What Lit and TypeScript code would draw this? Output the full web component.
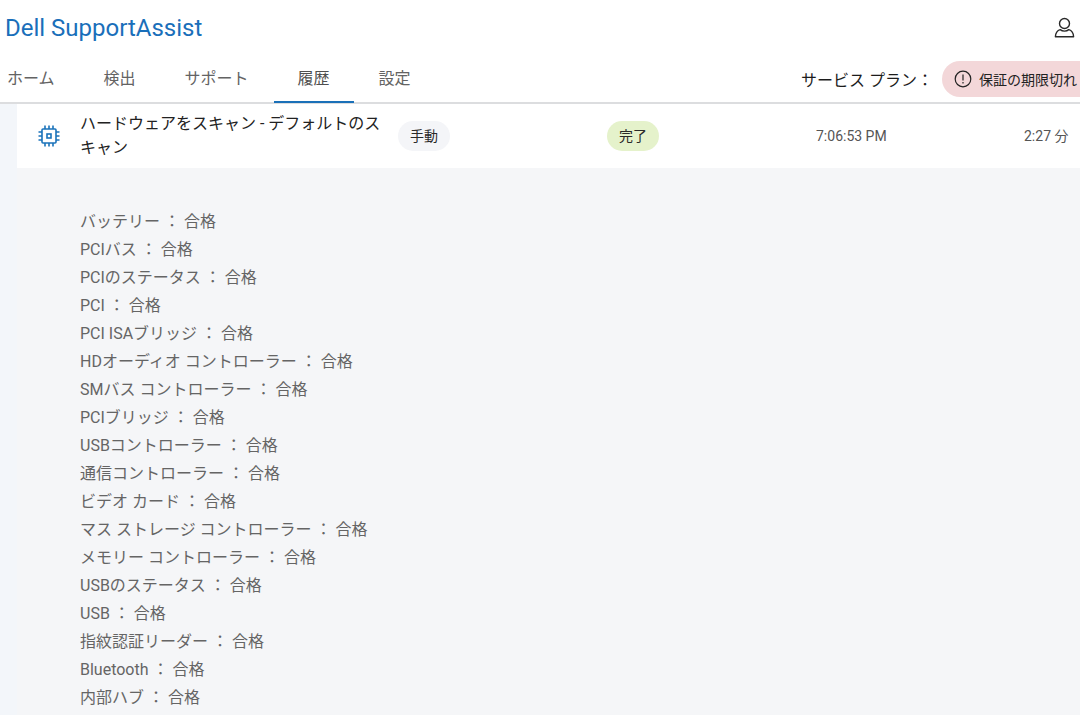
import { LitElement, html, css, svg } from "lit";
import { customElement, property } from "lit/decorators.js";
import { classMap } from "lit/directives/class-map.js";

const tabs = ["ホーム", "検出", "サポート", "履歴", "設定"];

const results = [
  "バッテリー",
  "PCIバス",
  "PCIのステータス",
  "PCI",
  "PCI ISAブリッジ",
  "HDオーディオ コントローラー",
  "SMバス コントローラー",
  "PCIブリッジ",
  "USBコントローラー",
  "通信コントローラー",
  "ビデオ カード",
  "マス ストレージ コントローラー",
  "メモリー コントローラー",
  "USBのステータス",
  "USB",
  "指紋認証リーダー",
  "Bluetooth",
  "内部ハブ",
];

@customElement("support-header")
class SupportHeader extends LitElement {
  @property() current = "";

  static styles = css`
    :host {
      display: block;
      background: #fff;
      border-bottom: 2px solid #dcdddf;
    }
    .brand {
      display: flex;
      justify-content: space-between;
      align-items: center;
      height: 55px;
      padding: 0 5px;
    }
    h1 {
      margin: 0;
      font-size: 24px;
      font-weight: 400;
      line-height: 32px;
      color: #1a6fba;
    }
    .account {
      display: flex;
      padding: 0;
      border: 0;
      background: none;
      color: #2a2a2a;
    }
    .bar {
      display: flex;
      justify-content: space-between;
      align-items: stretch;
      height: 47px;
    }
    nav {
      display: flex;
      gap: 1px;
      margin-left: -17px;
    }
    .tab {
      padding: 12px 24px 0;
      line-height: 24px;
      color: #636363;
      text-decoration: none;
      margin-bottom: -1px;
    }
    .active {
      color: #4f4f4f;
      border-bottom: 2px solid #1a70b8;
    }
    .plan {
      display: flex;
      align-items: center;
      gap: 9px;
      color: #1c1c1c;
    }
    .expired {
      display: flex;
      align-items: center;
      gap: 7px;
      height: 36px;
      padding: 0 3px 0 12px;
      border: 0;
      border-radius: 18px 0 0 18px;
      background: #f3d7d9;
      color: #222;
      font: inherit;
      font-size: 14px;
    }
  `;

  render() {
    return html`
      <div class="brand">
        <h1>Dell SupportAssist</h1>
        <button class="account" aria-label="アカウント">
          <svg width="21" height="22" viewBox="0 0 21 22" fill="none" stroke="currentColor" stroke-width="1.4">
            <circle cx="10.5" cy="6.5" r="5" />
            <path d="M6.2 12.6C3.4 13.4 1.6 15.8 1.4 19.8H19.6C19.4 15.8 17.6 13.4 14.8 12.6C12.5 14.6 8.5 14.6 6.2 12.6Z" stroke-linejoin="round" />
          </svg>
        </button>
      </div>
      <div class="bar">
        <nav>
          ${tabs.map(
            (t) => html`<a href="#" class=${classMap({ tab: true, active: t === this.current })}>${t}</a>`
          )}
        </nav>
        <div class="plan">
          <span>サービス プラン：</span>
          <button class="expired">
            <svg width="18" height="18" viewBox="0 0 18 18" fill="none" stroke="currentColor" stroke-width="1.2">
              <circle cx="9" cy="9" r="7.8" />
              <path d="M9 4.6V10.6M9 11.9V13.4" />
            </svg>
            保証の期限切れ
          </button>
        </div>
      </div>
    `;
  }
}

@customElement("scan-entry")
class ScanEntry extends LitElement {
  static styles = css`
    :host {
      display: block;
    }
    .row {
      display: grid;
      grid-template-columns: 63px 310fr 217fr 209fr 208fr 56px;
      align-items: center;
      height: 64px;
      background: #fff;
    }
    .chip-icon {
      justify-self: center;
      color: #1b73ba;
    }
    h2 {
      margin: 0;
      font-size: 16px;
      font-weight: 400;
      line-height: 24px;
      color: #222;
    }
    .chip {
      justify-self: start;
      margin-left: 8px;
      padding: 0 12px;
      border-radius: 15px;
      background: #f4f5f8;
      font-size: 14px;
      line-height: 30px;
      color: #2a2a2a;
    }
    .done {
      margin-left: 0;
      background: #e5f2cb;
    }
    .meta {
      font-size: 14px;
      line-height: 24px;
      color: #555;
      white-space: nowrap;
    }
    .results {
      margin: 0;
      padding: 40px 63px 24px;
      list-style: none;
      background: #f5f6f8;
      line-height: 28px;
      color: #656565;
    }
  `;

  render() {
    const pins = [7, 11, 15].map(
      (p) => svg`<path d="M${p} 0.5V4M${p} 18V21.5M0.5 ${p}H4M18 ${p}H21.5" />`
    );
    return html`
      <div class="row">
        <svg class="chip-icon" width="22" height="22" viewBox="0 0 22 22" fill="none" stroke="currentColor" stroke-width="1.6">
          <rect x="4" y="4" width="14" height="14" rx="1" />
          <rect x="9" y="9" width="4" height="4" />
          ${pins}
        </svg>
        <h2>ハードウェアをスキャン - デフォルトのスキャン</h2>
        <span class="chip">手動</span>
        <span class="chip done">完了</span>
        <time class="meta">7:06:53 PM</time>
        <span class="meta">2:27 分</span>
      </div>
      <ul class="results">
        ${results.map((name) => html`<li>${name} ： 合格</li>`)}
      </ul>
    `;
  }
}

@customElement("app-root")
class AppRoot extends LitElement {
  static styles = css`
    :host {
      display: flex;
      flex-direction: column;
      height: 100vh;
      overflow: hidden;
      background: #f3f6fa;
      font-family: Roboto, "Noto Sans CJK JP", sans-serif;
      font-size: 16px;
    }
    main {
      flex: 1;
      min-height: 0;
      overflow: hidden;
      padding-left: 17px;
    }
  `;

  render() {
    return html`
      <support-header current="履歴" lang="ja"></support-header>
      <main lang="ja"><scan-entry></scan-entry></main>
    `;
  }
}
